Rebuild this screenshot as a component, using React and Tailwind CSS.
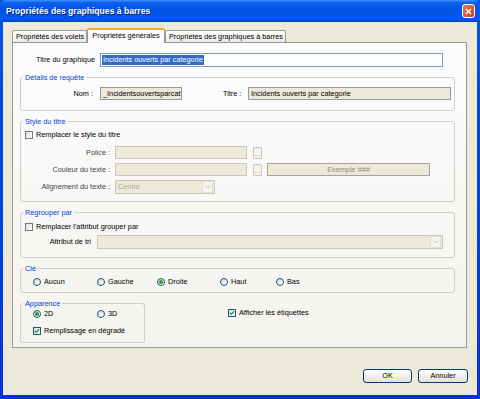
import React from 'react';

const Check = ({ checked, label, className = '' }) => (
  <div className={`flex items-center h-[10px] ${className}`}>
    <div className={`w-[8px] h-[8px] border flex items-center justify-center bg-gradient-to-br from-[#dcdcd7] to-white ${checked ? 'border-[#1c5180]' : 'border-[#707a86]'}`}>
      {checked && (
        <svg width="6" height="6" viewBox="0 0 6 6">
          <path d="M0.8 2.8 L2.3 4.4 L5.2 1.2" fill="none" stroke="#21a121" strokeWidth="1.3" />
        </svg>
      )}
    </div>
    <span className="ml-[3px] leading-none whitespace-nowrap">{label}</span>
  </div>
);

const Radio = ({ checked, label, className = '' }) => (
  <div className={`flex items-center h-[10px] ${className}`}>
    <div className="w-[8px] h-[8px] rounded-full border border-[#1c5180] bg-gradient-to-br from-[#dcdcd7] to-white flex items-center justify-center">
      {checked && <div className="w-[4px] h-[4px] rounded-full bg-[#2a9a2a]" />}
    </div>
    <span className="ml-[3px] leading-none">{label}</span>
  </div>
);

const Group = ({ title, className = '', children }) => (
  <fieldset className={`border border-[#d0d0bf] rounded-[3px] ${className}`}>
    <legend className="ml-[2px] px-[2px] text-[#0046d5] leading-[9px]">{title}</legend>
    {children}
  </fieldset>
);

const DisabledSelect = ({ value, className = '' }) => (
  <div className={`h-[14px] border border-[#c9c7ba] bg-[#ece9d8] flex items-center ${className}`}>
    <span className="flex-1 pl-[2px] text-[#aca899] leading-none">{value}</span>
    <div className="w-[11px] h-[12px] mr-px bg-[#f4f3ee] border border-[#e1ded2] rounded-[1px] flex items-center justify-center">
      <svg width="6" height="4" viewBox="0 0 6 4">
        <path d="M0.5 0.5 L3 3 L5.5 0.5" fill="none" stroke="#c9c7ba" strokeWidth="1" />
      </svg>
    </div>
  </div>
);

const XpButton = ({ label, className = '' }) => (
  <button className={`h-[14px] border border-[#003c74] rounded-[3px] bg-gradient-to-b from-white to-[#e3e2da] flex items-center justify-center leading-none ${className}`}>
    {label}
  </button>
);

export default function App() {
  return (
    <div className="w-[480px] h-[399px] flex flex-col bg-gradient-to-b from-[#0054e3] to-[#0831d9] font-['Liberation_Sans',Arial,sans-serif] text-[7.3px] text-black select-none">
      {/* title bar */}
      <div className="h-[22px] shrink-0 flex items-center pl-[6px] pr-[5px] rounded-t-[6px] bg-[linear-gradient(to_bottom,#3d95ff_0%,#0a5fee_12%,#0054e3_45%,#0058ee_85%,#0043cf_100%)]">
        <span className="flex-1 text-white font-bold text-[8.6px] leading-none [text-shadow:1px_1px_0_#0a1e6e]">
          Propriétés des graphiques à barres
        </span>
        <div className="w-[13px] h-[14px] rounded-[3px] border border-white bg-gradient-to-br from-[#e8785a] to-[#c8401f] flex items-center justify-center">
          <svg width="7" height="7" viewBox="0 0 7 7">
            <path d="M1 1 L6 6 M6 1 L1 6" stroke="white" strokeWidth="1.4" />
          </svg>
        </div>
      </div>

      <div className="flex-1 mx-[3px] mb-[4px] bg-[#ece9d8] flex flex-col pl-[9px] pr-[10px] pt-[5px]">
        {/* tabs */}
        <div className="flex items-end h-[15px]">
          <div className="w-[75px] h-[12px] border border-b-0 border-[#919b9c] rounded-t-[2px] bg-gradient-to-b from-white to-[#ecebe6] flex items-center pl-[3px] leading-none">
            Propriétés des volets
          </div>
          <div className="relative z-10 -mb-px w-[78px] h-[15px] border border-b-0 border-[#919b9c] border-t-[2px] border-t-[#f1a933] rounded-t-[2px] bg-[#fcfcfe] flex items-center justify-center leading-none pb-[1px]">
            Propriétés générales
          </div>
          <div className="w-[121px] h-[12px] border border-b-0 border-[#919b9c] rounded-t-[2px] bg-gradient-to-b from-white to-[#ecebe6] flex items-center pl-[3px] leading-none">
            Propriétés des graphiques à barres
          </div>
        </div>

        {/* panel */}
        <div className="h-[306px] border border-[#919b9c] bg-gradient-to-b from-[#fcfcfe] to-[#f4f3ee] pt-[10px] pl-[7px] pr-[11px] flex flex-col">
          <div className="flex items-center h-[14px]">
            <span className="w-[75px] text-right leading-none">Titre du graphique</span>
            <div className="ml-[5px] w-[343px] h-[14px] border border-[#7f9db9] bg-white flex items-center pl-[1px]">
              <span className="bg-[#316ac5] text-white leading-[10px] px-px">Incidents ouverts par categorie</span>
            </div>
          </div>

          <Group title="Détails de requête" className="mt-[6px] pb-[10px]">
            <div className="mt-[5px] flex items-center h-[13px] pr-[3px]">
              <span className="w-[72px] text-right leading-none">Nom :</span>
              <div className="ml-[7px] w-[82px] h-[13px] border border-[#8f9aa6] bg-[#ece9d8] flex items-center pl-[2px] leading-none overflow-hidden whitespace-nowrap">
                _Incidentsouvertsparcat
              </div>
              <span className="ml-[41px] w-[19px] leading-none whitespace-nowrap">Titre :</span>
              <div className="ml-[6px] flex-1 h-[13px] border border-[#8f9aa6] bg-[#ece9d8] flex items-center pl-[2px] leading-none">
                Incidents ouverts par categorie
              </div>
            </div>
          </Group>

          <Group title="Style du titre" className="mt-[6px] pb-[7px]">
            <Check label="Remplacer le style du titre" className="mt-[4px] ml-[4px]" />
            <div className="mt-[6px] flex items-center h-[13px]">
              <span className="w-[89px] text-right leading-none text-[#444]">Police :</span>
              <div className="ml-[5px] w-[132px] h-[13px] border border-[#c9c7ba] bg-[#ece9d8]" />
              <div className="ml-[6px] w-[9px] h-[12px] border border-[#c9c7ba] rounded-[1px] bg-[#f4f3ee] flex items-end justify-center text-[#aca899] leading-[8px]">...</div>
            </div>
            <div className="mt-[4px] flex items-center h-[13px]">
              <span className="w-[89px] text-right leading-none text-[#444]">Couleur du texte :</span>
              <div className="ml-[5px] w-[132px] h-[13px] border border-[#c9c7ba] bg-[#ece9d8]" />
              <div className="ml-[6px] w-[9px] h-[12px] border border-[#c9c7ba] rounded-[1px] bg-[#f4f3ee] flex items-end justify-center text-[#aca899] leading-[8px]">...</div>
              <div className="ml-[5px] w-[163px] h-[13px] border border-[#a6a496] bg-[#ece9d8] flex items-center justify-center text-[#8d8b80] leading-none">
                Exemple ###
              </div>
            </div>
            <div className="mt-[4px] flex items-center h-[14px]">
              <span className="w-[89px] text-right leading-none text-[#444]">Alignement du texte :</span>
              <DisabledSelect value="Centre" className="ml-[5px] w-[100px]" />
            </div>
          </Group>

          <Group title="Regrouper par" className="mt-[6px] pb-[8px]">
            <Check label="Remplacer l'attribut grouper par" className="mt-[5px] ml-[4px]" />
            <div className="mt-[3px] flex items-center h-[14px]">
              <span className="w-[70px] text-right leading-none">Attribut de tri</span>
              <DisabledSelect value="" className="ml-[6px] w-[346px]" />
            </div>
          </Group>

          <Group title="Clé" className="mt-[6px] pb-[5px]">
            <div className="mt-[4px] ml-[12px] flex">
              <Radio label="Aucun" className="w-[64px]" />
              <Radio label="Gauche" className="w-[60px]" />
              <Radio label="Droite" checked className="w-[63px]" />
              <Radio label="Haut" className="w-[56px]" />
              <Radio label="Bas" />
            </div>
          </Group>

          <div className="mt-[6px] flex items-start">
            <Group title="Apparence" className="w-[125px] pb-[6px]">
              <div className="mt-[1px] ml-[12px] flex">
                <Radio label="2D" checked className="w-[64px]" />
                <Radio label="3D" />
              </div>
              <Check label="Remplissage en dégradé" checked className="mt-[7px] ml-[12px]" />
            </Group>
            <Check label="Afficher les étiquettes" checked className="ml-[83px] mt-[9px]" />
          </div>
        </div>

        {/* buttons */}
        <div className="mt-[21px] -mr-px flex justify-end gap-[6px]">
          <XpButton label="OK" className="w-[49px]" />
          <XpButton label="Annuler" className="w-[50px]" />
        </div>
      </div>
    </div>
  );
}
